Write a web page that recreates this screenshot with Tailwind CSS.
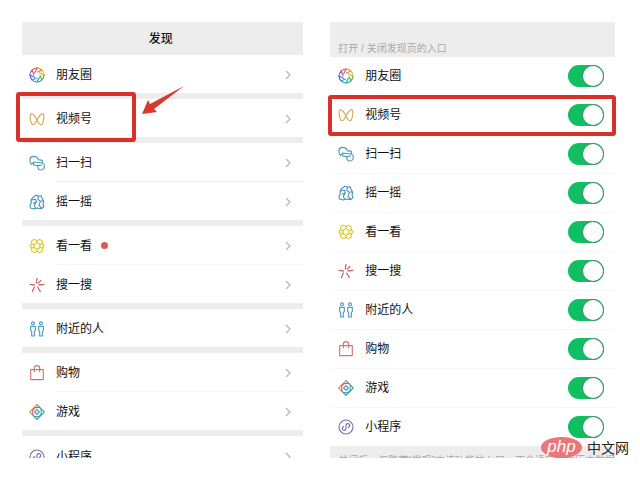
<!DOCTYPE html>
<html lang="zh-CN">
<head>
  <meta charset="UTF-8" />
  <meta name="viewport" content="width=device-width, initial-scale=1.0"/>
  <title>发现</title>
  <script src="https://cdn.jsdelivr.net/npm/@tailwindcss/browser@4"></script>
</head>
<body class="bg-white text-[#111] font-['Liberation_Sans','Noto_Sans_CJK_SC',sans-serif]">

  <!-- Icons -->
  <svg class="hidden" xmlns="http://www.w3.org/2000/svg">
    <symbol id="moments" viewBox="0 0 24 24">
      <g fill="none" stroke-width="1.8" stroke-linecap="round">
        <path d="M12 1.5A10.500 10.500 0 0 1 19.400 4.600L12.500 7.500" stroke="#e58a35"/>
        <path d="M19.400 4.600A10.500 10.500 0 0 1 22.500 12L15.500 8.500" stroke="#e3b62c"/>
        <path d="M22.500 12A10.500 10.500 0 0 1 19.400 19.400L16.500 12.500" stroke="#63b94d"/>
        <path d="M19.400 19.400A10.500 10.500 0 0 1 12 22.500L15.500 15.500" stroke="#2fae9c"/>
        <path d="M12 22.500A10.500 10.500 0 0 1 4.600 19.400L11.500 16.500" stroke="#3a9fdc"/>
        <path d="M4.600 19.400A10.500 10.500 0 0 1 1.500 12L8.500 15.500" stroke="#4c73d6"/>
        <path d="M1.500 12A10.500 10.500 0 0 1 4.600 4.600L7.500 11.500" stroke="#9a5cc6"/>
        <path d="M4.600 4.600A10.500 10.500 0 0 1 12 1.500L8.500 8.500" stroke="#e0605e"/>
      </g>
    </symbol>
    <symbol id="channels" viewBox="0 0 24 24">
      <path d="M12 14C9 7 5 3 3 4C.5 5.500 2 17 4.500 20C7 22 10 18 12 14C14 18 17 22 19.500 20C22 17 23.500 5.500 21 4C19 3 15 7 12 14Z" fill="none" stroke="#d9ac55" stroke-width="1.800" stroke-linejoin="round"/>
    </symbol>
    <symbol id="scan" viewBox="0 0 24 24">
      <path d="M4 14C0 10 0 2 7 2C11 2 13 4 14 7L20 8V12L7 10.500L4 14ZM7 11V15L13 16C13 20 15 22.500 18 22.500C22 22.500 24 18 22.500 14L20 12M13 16L19 15" fill="none" stroke="#4a9dbd" stroke-width="1.700" stroke-linejoin="round" stroke-linecap="round"/>
    </symbol>
    <symbol id="shake" viewBox="0 0 24 24">
      <path d="M5 6L10 2L14 3L18 2.500L20 7L22 11L21 15L22.500 19L19 22L12 21L8 22.500L2 21L1.500 17L3.500 13L3 9ZM3.500 9L10 8L11 12L6 14M11 12L8 17L10 22M14 3L13.500 8L17 11L15 17L19 21M17 11L21 10" fill="none" stroke="#3f8fb8" stroke-width="1.600" stroke-linejoin="round"/>
    </symbol>
    <symbol id="top-stories" viewBox="0 0 24 24">
      <g fill="none" stroke="#dccb35" stroke-width="1.800" stroke-linejoin="round">
        <path d="M8 2L12 4L16 2L20 4.500V9L22.500 12L20 15V19.500L16 22L12 20L8 22L4 19.500V15L1.500 12L4 9V4.500Z"/>
        <circle cx="12" cy="12" r="4.500"/>
        <path d="M4 9L8 10M12 4V7.500M20 9L16 10M20 15L16 14M12 20V16.500M4 15L8 14"/>
      </g>
    </symbol>
    <symbol id="search" viewBox="0 0 24 24">
      <path d="M12 2L11 9M1.500 11L8 12M8 15L5 22M13 15L17 22M15 12L22.500 11M14 9L18 5" fill="none" stroke="#cf6663" stroke-width="1.900" stroke-linecap="round"/>
    </symbol>
    <symbol id="nearby" viewBox="0 0 24 24">
      <g fill="none" stroke="#4a9dbd" stroke-width="1.700" stroke-linejoin="round">
        <circle cx="6" cy="3.500" r="2.200"/><circle cx="18" cy="3.500" r="2.200"/>
        <path d="M2.500 8H9.500V14L8 16V22.500H4V16L2.500 14ZM14.500 8H21.500V14L20 16V22.500H16V16L14.500 14Z"/>
      </g>
    </symbol>
    <symbol id="shopping" viewBox="0 0 24 24">
      <path d="M2.500 7H21.500V21Q21.500 22 20.500 22H3.500Q2.500 22 2.500 21ZM8 11V5A4 4 0 0 1 16 5V11" fill="none" stroke="#cf7773" stroke-width="1.700" stroke-linejoin="round"/>
    </symbol>
    <symbol id="games" viewBox="0 0 24 24">
      <g fill="none" stroke-width="1.700" stroke-linejoin="round" stroke-linecap="round">
        <path d="M12 1L1 12L5 16" stroke="#e19a45"/>
        <path d="M12 1L23 12L19 16" stroke="#4ba994"/>
        <path d="M5 16L12 23L19 16" stroke="#3b8fc0"/>
        <path d="M16 5L9 5.500L5.500 9L6 16" stroke="#cf5e58"/>
        <path d="M8 19L15 18.500L18.500 15L18 8" stroke="#45a7a0"/>
        <path d="M12 8.500L15.500 12L12 15.500L8.500 12Z" stroke="#4a94c8"/>
      </g>
    </symbol>
    <symbol id="mini-programs" viewBox="0 0 24 24">
      <g fill="none" stroke="#7670b3" stroke-width="1.700" stroke-linecap="round">
        <circle cx="12" cy="12" r="10.500"/>
        <path d="M8.500 11.500A2.800 2.800 0 1 0 12 14.500V9.500A2.800 2.800 0 1 1 15.500 12.500"/>
      </g>
    </symbol>
    <symbol id="chevron" viewBox="0 0 6 10">
      <path d="M1 1L5 5L1 9" fill="none" stroke="#b5b5b5" stroke-width="1.200"/>
    </symbol>
  </svg>

  <main class="flex gap-[27px] pt-[22px] pl-[22px] pr-[25px]">

    <!-- Discover page -->
    <section class="flex-[141] bg-[#ededed] h-[436px] text-xs">
      <h1 class="h-[33px] flex items-center justify-center pr-1 pt-px font-medium">发现</h1>
      <nav class="h-[403px] overflow-y-clip flex flex-col gap-[6px]">
        <ul class="bg-white">
          <li><a href="#" class="h-[38px] flex items-center pt-px pl-[7px] pr-3"><svg class="size-4 mr-[11px]"><use href="#moments"/></svg>朋友圈<svg class="w-[6px] h-[10px] ml-auto"><use href="#chevron"/></svg></a></li>
        </ul>
        <ul class="bg-white relative">
          <li><a href="#" class="h-[38px] flex items-center pt-px pl-[7px] pr-3"><svg class="size-4 mr-[11px]"><use href="#channels"/></svg>视频号<svg class="w-[6px] h-[10px] ml-auto"><use href="#chevron"/></svg></a></li>
          <li aria-hidden="true" class="absolute -top-[7px] -left-[6px] w-[120px] h-[50px] border-4 border-[#d9302a] rounded-[3px]"></li>
          <li aria-hidden="true" class="absolute -top-[14px] left-[119px]">
            <svg class="w-11 h-[30px]" viewBox="0 0 44 30"><path d="M43 1L9 19L7 15L1 29L16 27L13 24Z" fill="#d9382f"/></svg>
          </li>
        </ul>
        <ul class="bg-white">
          <li><a href="#" class="h-[38px] flex items-center pt-px pl-[7px] pr-3"><svg class="size-4 mr-[11px]"><use href="#scan"/></svg>扫一扫<svg class="w-[6px] h-[10px] ml-auto"><use href="#chevron"/></svg></a></li>
          <li class="h-px ml-[34px] bg-[#f0f0f0]"></li>
          <li><a href="#" class="h-[38px] flex items-center pt-px pl-[7px] pr-3"><svg class="size-4 mr-[11px]"><use href="#shake"/></svg>摇一摇<svg class="w-[6px] h-[10px] ml-auto"><use href="#chevron"/></svg></a></li>
        </ul>
        <ul class="bg-white">
          <li><a href="#" class="h-[38px] flex items-center pt-px pl-[7px] pr-3"><svg class="size-4 mr-[11px]"><use href="#top-stories"/></svg>看一看<span class="size-[7px] ml-[9px] rounded-full bg-[#e2585a]"></span><svg class="w-[6px] h-[10px] ml-auto"><use href="#chevron"/></svg></a></li>
          <li class="h-px ml-[34px] bg-[#f7f7f7]"></li>
          <li><a href="#" class="h-[38px] flex items-center pt-px pl-[7px] pr-3"><svg class="size-4 mr-[11px]"><use href="#search"/></svg>搜一搜<svg class="w-[6px] h-[10px] ml-auto"><use href="#chevron"/></svg></a></li>
        </ul>
        <ul class="bg-white">
          <li><a href="#" class="h-[38px] flex items-center pt-px pl-[7px] pr-3"><svg class="size-4 mr-[11px]"><use href="#nearby"/></svg>附近的人<svg class="w-[6px] h-[10px] ml-auto"><use href="#chevron"/></svg></a></li>
        </ul>
        <ul class="bg-white">
          <li><a href="#" class="h-[38px] flex items-center pt-px pl-[7px] pr-3"><svg class="size-4 mr-[11px]"><use href="#shopping"/></svg>购物<svg class="w-[6px] h-[10px] ml-auto"><use href="#chevron"/></svg></a></li>
          <li class="h-px ml-[34px] bg-[#f7f7f7]"></li>
          <li><a href="#" class="h-[38px] flex items-center pt-px pl-[7px] pr-3"><svg class="size-4 mr-[11px]"><use href="#games"/></svg>游戏<svg class="w-[6px] h-[10px] ml-auto"><use href="#chevron"/></svg></a></li>
        </ul>
        <ul class="bg-white">
          <li><a href="#" class="h-10 flex items-center pt-px pl-[7px] pr-3"><svg class="size-4 mr-[11px]"><use href="#mini-programs"/></svg>小程序<svg class="w-[6px] h-[10px] ml-auto"><use href="#chevron"/></svg></a></li>
        </ul>
      </nav>
    </section>

    <!-- Entry settings -->
    <section class="flex-[142] relative text-xs">
      <h2 class="h-[35px] bg-[#ededed] flex items-end pl-2 pb-px text-[10px] leading-[14px] text-[#a8a8a8]">打开 / 关闭发现页的入口</h2>
      <div id="switches" class="divide-y divide-[#f7f7f7]"></div>
      <p class="h-3 overflow-hidden bg-[#ededed] pt-[8px] pl-2 text-[10px] leading-[14px] text-[#a8a8a8] whitespace-nowrap">关闭后，仅隐藏“发现”中该功能的入口，不会清空你的历史数据</p>

      <!-- Site mark -->
      <div class="absolute -right-[14px] bottom-0 flex items-center gap-[5px] text-sm leading-5 text-[#222]">
        <span class="w-[41px] h-[21px] rounded-[50%] bg-[#e7777b] flex items-center justify-center pb-[2px] text-[17px] leading-4 italic text-white">php</span>中文网
      </div>
    </section>
  </main>

  <script>
    const entries = [
      ["moments", "朋友圈"],
      ["channels", "视频号"],
      ["scan", "扫一扫"],
      ["shake", "摇一摇"],
      ["top-stories", "看一看"],
      ["search", "搜一搜"],
      ["nearby", "附近的人"],
      ["shopping", "购物"],
      ["games", "游戏"],
      ["mini-programs", "小程序"]
    ];

    document.getElementById("switches").innerHTML = entries.map(([icon, name]) => `
      <label class="relative h-[39px] last:h-[38px] flex items-center pl-2 pr-[11px]">
        <svg class="size-4 mr-[11px]"><use href="#${icon}"/></svg>${name}
        <input type="checkbox" checked class="peer sr-only">
        <span class="ml-auto w-9 h-[22px] p-px rounded-full bg-gray-300 peer-checked:bg-[#10bf61] flex justify-end"><span class="size-5 rounded-full bg-white ring-1 ring-[#3a9a68]"></span></span>
        ${icon === "channels" ? `<span class="absolute -top-[1px] -bottom-[2px] -left-[2px] -right-[1px] border-4 border-[#d9302a] rounded-[3px]"></span>` : ""}
      </label>`).join("");
  </script>
</body>
</html>
